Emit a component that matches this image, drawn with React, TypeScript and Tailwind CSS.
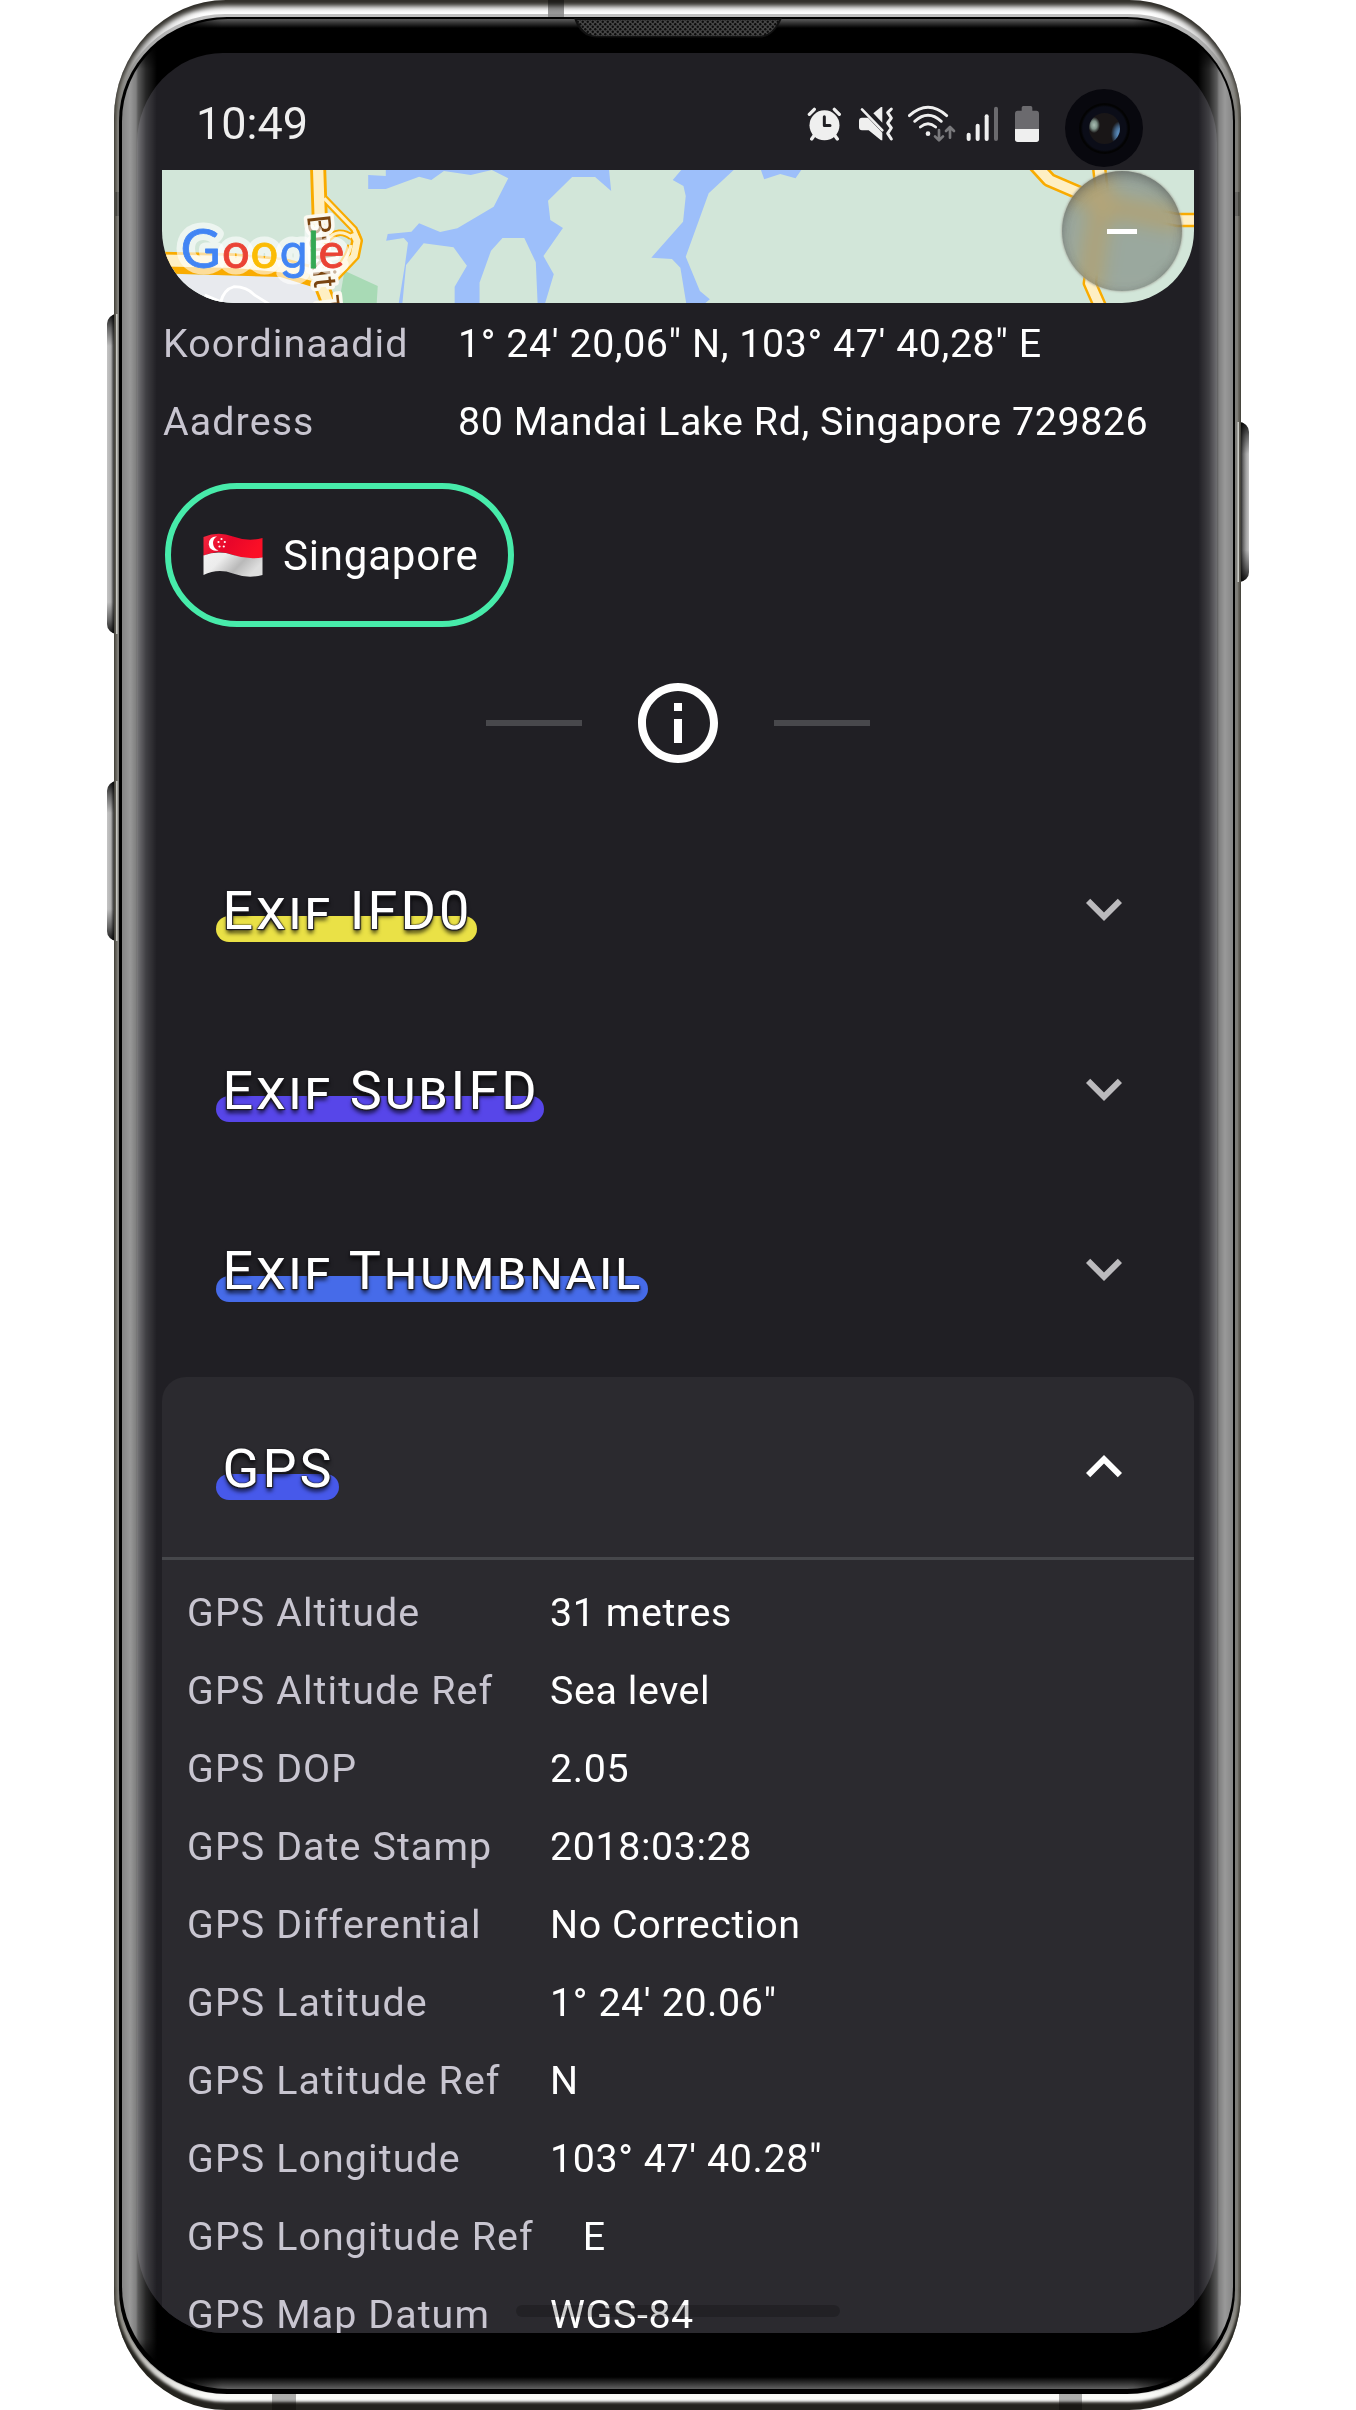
import type { ReactNode } from "react";

const exifSections = [
  { title: "Exif IFD0", bar: "bg-[#eae146]" },
  { title: "Exif SubIFD", bar: "bg-[#5746e9]" },
  { title: "Exif Thumbnail", bar: "bg-[#466be9]" },
];

const gpsRows: [string, string][] = [
  ["GPS Altitude", "31 metres"],
  ["GPS Altitude Ref", "Sea level"],
  ["GPS DOP", "2.05"],
  ["GPS Date Stamp", "2018:03:28"],
  ["GPS Differential", "No Correction"],
  ["GPS Latitude", "1° 24' 20.06\""],
  ["GPS Latitude Ref", "N"],
  ["GPS Longitude", "103° 47' 40.28\""],
  ["GPS Longitude Ref", "E"],
  ["GPS Map Datum", "WGS-84"],
];

const locationRows: [string, string][] = [
  ["Koordinaadid", "1° 24' 20,06\" N, 103° 47' 40,28\" E"],
  ["Aadress", "80 Mandai Lake Rd, Singapore 729826"],
];

function StatusIcons() {
  return (
    <div className="flex items-center">
      <svg viewBox="81 45 105 114" className="h-[38px] w-[35px]">
        <g stroke="#efefef" strokeWidth="10" strokeLinecap="round" fill="none">
          <path d="M88 73 L103 58 M163 58 L178 73 M103 136 L95 147 M164 136 L172 147" />
        </g>
        <circle cx="133.500" cy="106" r="45" fill="#efefef" />
        <path d="M133 80 V106.500 H150" fill="none" stroke="#201f24" strokeWidth="9" strokeLinecap="round" strokeLinejoin="round" />
      </svg>
      <svg viewBox="237 45 105 114" className="ml-[17px] h-[38px] w-[35px]">
        <path d="M246 83 H264 L307 128 V151 H303 L266 121 H246 Q237 121 237 112 V92 Q237 83 246 83 Z" fill="#efefef" />
        <path d="M303 51 H307 V98 L280 70 Z" fill="#efefef" />
        <path d="M246 58 L307 121" stroke="#efefef" strokeWidth="8" strokeLinecap="round" />
        <path d="M334 57 L323 68 L334 84 L323 99 L334 114 L323 130 L334 147" fill="none" stroke="#efefef" strokeWidth="9" strokeLinecap="round" strokeLinejoin="round" />
      </svg>
      <svg viewBox="384 45 144 114" className="ml-[14px] h-[38px] w-[48px]">
        <g fill="none" stroke="#efefef" strokeWidth="8.500" strokeLinecap="round">
          <path d="M388 77 Q444 27 500 77" />
          <path d="M404 94 Q444 58 484 94" />
          <path d="M421 111 Q444 92 467 111" />
        </g>
        <circle cx="444" cy="131" r="7" fill="#efefef" />
        <path d="M477 120 V151 M465 139 L477 151 L489 139 M510 143 V111 M498 123 L510 111 L522 123" fill="none" stroke="#79797c" strokeWidth="8" strokeLinecap="round" strokeLinejoin="round" />
      </svg>
      <svg viewBox="557 45 99 114" className="ml-[10px] h-[38px] w-[33px]">
        <g stroke="#efefef" strokeWidth="12" strokeLinecap="round">
          <path d="M565 134 V147" />
          <path d="M592 107 V147" />
          <path d="M619 79 V147" />
          <path d="M647 56 V147" stroke="#6b6a6e" />
        </g>
      </svg>
      <svg viewBox="705 45 72 114" className="ml-4 h-[38px] w-6">
        <path d="M725 62 V53 Q725 48 730 48 H752 Q757 48 757 53 V62 H769 Q777 62 777 71 V118 H705 V71 Q705 62 713 62 Z" fill="#6b6a6e" />
        <path d="M705 117 H777 V148 Q777 156 769 156 H713 Q705 156 705 148 Z" fill="#efefef" />
      </svg>
    </div>
  );
}

const googleLetters = [
  { c: "G", x: 180.5, size: 55, fill: "#4285f4", font: "Lato" },
  { c: "o", x: 222, size: 49, fill: "#ea4335", font: "Lato" },
  { c: "o", x: 250.5, size: 49, fill: "#fbbc05", font: "Lato" },
  { c: "g", x: 279.5, size: 46, fill: "#4285f4", font: "Inter" },
  { c: "l", x: 307.5, size: 50, fill: "#34a853", font: "Lato" },
  { c: "e", x: 318.5, size: 49, fill: "#ea4335", font: "Lato" },
];

function MapArt() {
  return (
    <svg viewBox="162 170 1032 133" className="block h-[133px] w-[1032px]">
      <rect x="162" y="170" width="1032" height="133" fill="#d2e6d9" />
      <g transform="translate(90 0) scale(0.38265 0.33333)">
        <path
          d="M727 525 L773 528 V505 H1356 L1362 573 L1320 531 H1260 L1197 602 L1203 660 L1236 684 L1185 768 L1212 823 L1188 915 H1170 L1165 787 L1135 714 H1078 L1048 752 L1018 848 V915 H953 V860 L985 797 L950 742 L872 730 L826 795 L816 915 H806 L823 795 L831 728 L820 714 L774 722 L778 702 L840 695 L860 670 L915 696 L960 685 L1055 620 L1093 535 L1050 510 L995 525 L925 513 L892 540 L860 530 L773 567 H727 Z"
          fill="#9dbffa"
        />
        <path d="M190 822 L480 828 L595 848 V915 H190 Z" fill="#e8eaee" />
        <path d="M665 812 L752 858 L749 915 H650 Z" fill="#a8dab5" />
        <path d="M300 885 L342 905 Q350 868 376 860 Q410 860 430 885 L472 915" fill="none" stroke="#fff" strokeWidth="8" />
        <g fill="none" strokeLinejoin="round">
          <g stroke="#f9ab00">
            <path d="M612 595 L690 688 L700 716" strokeWidth="21" />
            <path d="M688 695 L698 722 L690 768 L635 835" strokeWidth="31" />
            <path d="M620 718 Q650 682 684 712 M615 830 Q670 800 682 735" strokeWidth="20" />
            <path d="M596 500 L600 640 L596 830 L625 915" strokeWidth="42" />
            <path d="M180 782 L380 787 L500 800 L600 830" strokeWidth="54" />
            <path d="M220 808 L500 818 L590 850" strokeWidth="26" />
          </g>
          <g stroke="#feefc3">
            <path d="M612 595 L690 688 L700 716" strokeWidth="9" />
            <path d="M688 700 L698 722 L690 768 L635 835" strokeWidth="18" />
            <path d="M620 718 Q650 682 684 712 M615 830 Q670 800 682 735" strokeWidth="9" />
            <path d="M596 500 L600 640 L596 830 L625 915" strokeWidth="27" />
            <path d="M180 781 L380 786 L500 799 L600 830" strokeWidth="36" />
          </g>
        </g>
      </g>
      <g transform="translate(680 0) scale(0.38265 0.33333)">
        <g fill="#9dbffa">
          <path d="M7 505 L-19 540 L9 558 L15 588 L8 665 L-75 773 L-21 777 L1 803 L17 915 H60 L78 898 L52 873 L15 770 L75 580 L145 505 Z" />
          <path d="M210 505 L220 538 L262 522 L302 535 L320 505 Z" />
        </g>
        <g fill="none" strokeLinejoin="round" stroke="#f9ab00" strokeWidth="43">
          <path d="M925 490 L965 540 L1050 582 L1130 620 L1300 660 H1350" />
          <path d="M1095 500 L1105 600 L1085 720 L1071 850 L1098 920" strokeWidth="38" />
        </g>
        <g fill="none" strokeLinejoin="round" stroke="#feefc3" strokeWidth="28">
          <path d="M925 490 L965 540 L1050 582 L1130 620 L1300 660 H1350" />
          <path d="M1095 500 L1105 600 L1085 720 L1071 850 L1098 920" strokeWidth="25" />
        </g>
      </g>
      <text
        transform="translate(307 216) rotate(84)"
        fontSize="32.500"
        fill="#7a4510"
        stroke="#fbf9f0"
        strokeWidth="7"
        strokeLinejoin="round"
        paintOrder="stroke"
        className="font-[Roboto]"
      >
        Bukit T
      </text>
      <g strokeLinejoin="round">
        <text y="267.500" fill="#fff" fillOpacity="0.3" stroke="#fff" strokeOpacity="0.6" strokeWidth="13">
          {googleLetters.map((l, i) => (
            <tspan key={i} x={l.x} fontSize={l.size} fontFamily={l.font}>{l.c}</tspan>
          ))}
        </text>
        <text y="267.500" strokeWidth="0.800">
          {googleLetters.map((l, i) => (
            <tspan key={i} x={l.x} fontSize={l.size} fontFamily={l.font} fill={l.fill} stroke={l.fill}>{l.c}</tspan>
          ))}
        </text>
      </g>
    </svg>
  );
}

function SingaporeFlag() {
  return (
    <svg viewBox="0 0 60 44" className="h-11 w-[60px]">
      <defs>
        <linearGradient id="flagRed" x1="0" x2="1" y1="0" y2="0.3">
          <stop offset="0" stopColor="#f5283f" />
          <stop offset="0.5" stopColor="#e8062a" />
          <stop offset="1" stopColor="#fb0f26" />
        </linearGradient>
        <linearGradient id="flagWhite" x1="0" x2="1" y1="0" y2="0.4">
          <stop offset="0" stopColor="#f2f2f2" />
          <stop offset="0.35" stopColor="#ececec" />
          <stop offset="0.7" stopColor="#b9b9b9" />
          <stop offset="1" stopColor="#dedede" />
        </linearGradient>
      </defs>
      <path d="M0.500 4 Q15 -2 30 3.500 T59.500 5 V25 Q45 28 30 22 T0.500 23 Z" fill="url(#flagRed)" />
      <path d="M0.500 22.500 Q15 17 30 22 T59.500 24.500 V42 Q45 46 30 40.500 T0.500 42 Z" fill="url(#flagWhite)" />
      <path d="M14 3.500 A7.200 7.200 0 1 0 15.500 17.300 A7.500 7.500 0 0 1 14 3.500 Z" fill="#fff" />
      <g fill="#fff">
        <circle cx="18.500" cy="6" r="1.100" />
        <circle cx="15.500" cy="9" r="1.100" />
        <circle cx="21.800" cy="9" r="1.100" />
        <circle cx="16.500" cy="13.500" r="1.100" />
        <circle cx="20.800" cy="13.500" r="1.100" />
      </g>
    </svg>
  );
}

function SectionTitle({ title, bar }: { title: string; bar: string }) {
  return (
    <h2 className="relative flex h-[63px] items-center pl-[6.5px] pr-[4.5px]">
      <span className={`absolute left-0 top-[38px] h-[26px] w-full rounded-full ${bar}`} />
      <span className="relative top-px whitespace-nowrap text-[54px] leading-[63px] tracking-[3.1px] text-white [font-variant:small-caps] [text-shadow:0_0_1px_#1c1b20,0_0_2px_#1c1b20,1px_1px_1px_#1c1b20,-1px_1px_1px_#1c1b20,0_4px_4px_rgba(0,0,0,0.75)]">
        {title}
      </span>
    </h2>
  );
}

function Chevron({ open = false }: { open?: boolean }) {
  return (
    <svg viewBox="0 0 24 24" className={open ? "size-[72px] rotate-180 text-white" : "size-[72px] text-[#bbbabd]"}>
      <path fill="currentColor" d="M16.590 8.590 12 13.170 7.410 8.590 6 10l6 6 6-6z" />
    </svg>
  );
}

function SideButton({ className }: { className: string }) {
  return (
    <div className={`absolute w-[12px] overflow-hidden ${className}`}>
      <div className="absolute inset-0 bg-[linear-gradient(to_bottom,rgba(0,0,0,0.9)_0,rgba(0,0,0,0.45)_14px,transparent_32px,transparent_calc(100%-32px),rgba(0,0,0,0.45)_calc(100%-14px),rgba(0,0,0,0.9)_100%)]" />
    </div>
  );
}

export default function App(): ReactNode {
  return (
    <div className="relative h-[2410px] w-[1356px] overflow-hidden bg-white pl-[114px] font-[Roboto,sans-serif]">
      <SideButton className="left-[107px] top-[314px] h-[320px] rounded-l-[10px] bg-[linear-gradient(to_right,#c4c4c4_0,#b0b0b0_4px,#555_6px,#111_9px)]" />
      <SideButton className="left-[107px] top-[781px] h-[160px] rounded-l-[10px] bg-[linear-gradient(to_right,#c4c4c4_0,#b0b0b0_4px,#555_6px,#111_9px)]" />
      <SideButton className="left-[1237px] top-[422px] h-[160px] rounded-r-[10px] bg-[linear-gradient(to_left,#c4c4c4_0,#a0a0a0_3px,#666_6px,#111_9px)]" />

      <div className="relative h-[2410px] w-[1127px] overflow-hidden rounded-[112px/118px] bg-[linear-gradient(to_bottom,#dedede_0,#fff_14px,#c9c9c9_50px,#79776d_110px,#79776d_2290px,#b5b3ae_2350px,#fafbf8_2396px,#fff_2410px)] shadow-[inset_0_6px_5px_#2f2d28,inset_0_-8px_3px_#24231e]">
        <div className="absolute left-0 top-[192px] h-6 w-full bg-[#4a4943]" />
        <div className="absolute left-[434px] top-0 h-[17px] w-4 bg-black/40" />
        <div className="absolute bottom-0 left-[158px] h-4 w-6 bg-black/30" />
        <div className="absolute bottom-0 left-[945px] h-4 w-[23px] bg-black/30" />
        <div className="absolute left-[2px] top-[314px] h-[320px] w-[2px] bg-[#c6c7c0]" />
        <div className="absolute left-[2px] top-[781px] h-[160px] w-[2px] bg-[#c6c7c0]" />
        <div className="absolute right-[2px] top-[422px] h-[160px] w-[2px] bg-[#c6c7c0]" />
        <div className="absolute inset-x-[3px] bottom-[16px] top-[14px] rounded-[108px/106px] bg-[#858585]/50" />

        <div className="absolute bottom-[16px] left-[5px] right-[6px] top-[17px] overflow-hidden rounded-[108px/104px] bg-black">
          <div className="absolute inset-x-[2.5px] bottom-[5px] top-[2px] overflow-hidden rounded-[106px/102px]">
            <div className="h-[9px] w-full bg-[linear-gradient(to_bottom,#5c5c5c,#000)] [mask-image:linear-gradient(to_right,transparent_50px,black_100px,black_calc(100%-100px),transparent_calc(100%-50px))]" />
            <div className="absolute bottom-0 h-3 w-full bg-[linear-gradient(to_top,#616161,#000)] [mask-image:linear-gradient(to_right,transparent_50px,black_100px,black_calc(100%-100px),transparent_calc(100%-50px))]" />
          </div>

          <svg viewBox="0 0 208 20" className="absolute left-[455px] top-[1px] h-5 w-[208px]">
            <defs>
              <pattern id="mesh" width="5" height="5" patternUnits="userSpaceOnUse">
                <rect width="5" height="5" fill="#464646" />
                <circle cx="1.250" cy="1.250" r="1.200" fill="#0c0c0c" />
                <circle cx="3.750" cy="3.750" r="1.200" fill="#0c0c0c" />
              </pattern>
            </defs>
            <path d="M0 0 H208 Q200 19 186 19.500 H22 Q6 19 0 0 Z" fill="#111" />
            <path d="M3 2 H205 Q198 18 184 18 H24 Q10 18 3 2 Z" fill="url(#mesh)" />
          </svg>

          <main className="absolute left-[18px] top-[36px] flex h-[2280px] w-[1080px] flex-col overflow-hidden rounded-[86px/90px] bg-[#201f24]">
            <header className="flex h-[117px] shrink-0 items-center justify-between pl-[59px] pr-[178px] pt-6">
              <span className="text-[45px] leading-[54px] text-[#efefef]">10:49</span>
              <StatusIcons />
            </header>

            <div className="ml-[25px] flex w-[1032px] flex-col">
              <section className="relative h-[133px] overflow-hidden rounded-b-[72px]">
                <MapArt />
                <button className="absolute left-[900px] top-[1px] flex size-[120px] items-center justify-center rounded-full bg-[#5b5b58]/45 shadow-[inset_0_8px_14px_-4px_rgba(60,60,60,0.45),inset_0_0_8px_rgba(60,60,60,0.2),0_0_2px_1px_rgba(165,165,155,0.7)] backdrop-blur-[10px] backdrop-saturate-125">
                  <span className="h-[5px] w-[30px] bg-white" />
                </button>
              </section>

              <dl className="mt-[2px] text-[39.375px] leading-[78px]">
                {locationRows.map(([k, v]) => (
                  <div key={k} className="flex whitespace-nowrap pl-[1px]">
                    <dt className="w-[295px] tracking-[1.1px] text-[#c8c5d0]">{k}</dt>
                    <dd className="tracking-[0.57px] text-white">{v}</dd>
                  </div>
                ))}
              </dl>

              <div className="ml-[3px] mt-[22px] flex h-[144px] w-[349px] items-center gap-5 rounded-full border-[6px] border-[#47ebaa] pl-[32px]">
                <SingaporeFlag />
                <span className="text-[42px] tracking-[0.8px] text-white">Singapore</span>
              </div>

              <div className="mt-[56px] flex h-20 items-center justify-center gap-14">
                <span className="h-[6px] w-24 bg-[#48484c]" />
                <svg viewBox="2 2 20 20" className="size-20">
                  <path
                    fill="#fff"
                    d="M11 7h2v2h-2zm0 4h2v6h-2zm1-9C6.480 2 2 6.480 2 12s4.480 10 10 10 10-4.480 10-10S17.520 2 12 2m0 18c-4.410 0-8-3.590-8-8s3.590-8 8-8 8 3.590 8 8-3.590 8-8 8"
                  />
                </svg>
                <span className="h-[6px] w-24 bg-[#48484c]" />
              </div>

              <div className="mt-14">
                {exifSections.map((s) => (
                  <section key={s.title} className="flex h-[180px] items-center justify-between px-[54px]">
                    <SectionTitle {...s} />
                    <Chevron />
                  </section>
                ))}
              </div>

              <section className="mt-[18px] rounded-t-[24px] bg-[#2b2a2f]">
                <div className="flex h-[180px] items-center justify-between px-[54px]">
                  <SectionTitle title="GPS" bar="bg-[#4759ea]" />
                  <Chevron open />
                </div>
                <div className="h-[3px] bg-[#46474b]" />
                <dl className="pl-[25px] pt-[14px] text-[39.375px] leading-[78px]">
                  {gpsRows.map(([k, v]) => (
                    <div key={k} className="flex whitespace-nowrap">
                      <dt className="min-w-[363px] pr-[49px] tracking-[1.1px] text-[#c8c5d0]">{k}</dt>
                      <dd className="tracking-[0.6px] text-white">{v}</dd>
                    </div>
                  ))}
                </dl>
              </section>
            </div>
            <div className="absolute left-[379px] top-[2252px] h-3 w-[324px] rounded-full bg-black/20" />
          </main>

          <div className="absolute left-[946px] top-[72px] flex size-[78px] items-center justify-center rounded-full bg-[#08080e]">
            <div className="flex size-[51px] items-center justify-center rounded-full bg-[radial-gradient(circle,#0b0d18_60%,#030303_66%,#050507_100%)]">
              <div className="size-[31px] rounded-full bg-[radial-gradient(ellipse_6px_8px_at_5px_12px,#a9bdb3,#7f938a_50%,transparent_100%),radial-gradient(ellipse_9px_13px_at_31px_21px,#5787b5_30%,#3f5f80_60%,transparent_100%)] bg-[#191617]" />
            </div>
          </div>

          <div className="pointer-events-none absolute inset-x-[2.5px] bottom-[5px] top-[2px] overflow-hidden rounded-[106px/102px]">
            <div className="flex h-full justify-between [mask-image:linear-gradient(to_bottom,transparent_24px,black_50px,black_calc(100%-50px),transparent_calc(100%-24px))]">
              <div className="h-full w-[35px] bg-[linear-gradient(to_right,rgba(255,255,255,0.52)_0,rgba(255,255,255,0.6)_8px,rgba(255,255,255,0.5)_14px,rgba(255,255,255,0.36)_16px,rgba(255,255,255,0.15)_24px,transparent_35px)]" />
              <div className="h-full w-[35px] bg-[linear-gradient(to_left,rgba(255,255,255,0.52)_0,rgba(255,255,255,0.6)_8px,rgba(255,255,255,0.5)_14px,rgba(255,255,255,0.36)_16px,rgba(255,255,255,0.15)_24px,transparent_35px)]" />
            </div>
          </div>
        </div>
      </div>
    </div>
  );
}
